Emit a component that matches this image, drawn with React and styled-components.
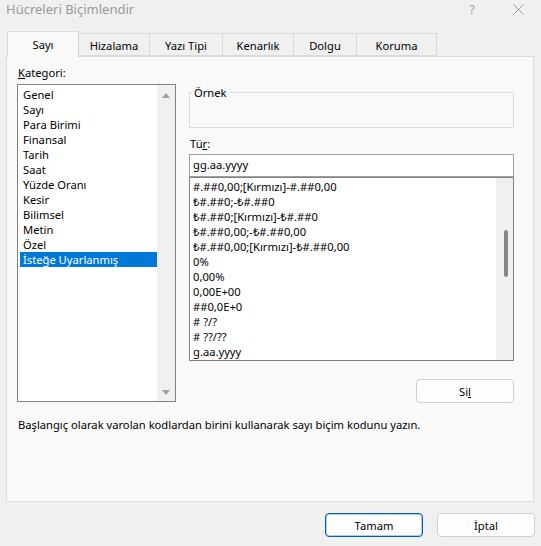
import React from 'react';
import styled, { createGlobalStyle } from 'styled-components';

const Global = createGlobalStyle`
    html, body {
        margin: 0;
        padding: 0;
        background: #f0f0f0;
    }
    body {
        font-family: "Noto Sans", "Open Sans", sans-serif;
        font-size: 11.2px;
        color: #000;
    }
`;

const Window = styled.div`
    width: 541px;
    height: 546px;
    background: #f0f0f0;
    display: flex;
    flex-direction: column;
    overflow: hidden;
`;

const TitleBar = styled.div`
    height: 18px;
    display: flex;
    align-items: center;
    justify-content: space-between;
    padding-left: 6px;
`;

const Title = styled.div`
    font-size: 13px;
    color: #9a9a9a;
    line-height: 18px;
`;

const TitleButtons = styled.div`
    display: flex;
    height: 18px;
`;

const TitleButton = styled.div`
    width: 46px;
    display: flex;
    align-items: center;
    justify-content: center;
    color: #9a9a9a;
    font-size: 12px;
`;

const TabStrip = styled.div`
    margin-top: 13px;
    height: 25px;
    display: flex;
    align-items: flex-end;
    padding-left: 7px;
`;

const Tab = styled.div`
    width: ${p => p.$w}px;
    height: ${p => (p.$active ? 26 : 23)}px;
    margin-bottom: ${p => (p.$active ? -1 : 0)}px;
    box-sizing: border-box;
    border: 1px solid #d9d9d9;
    border-bottom: ${p => (p.$active ? 'none' : '1px solid #d9d9d9')};
    border-left: ${p => (p.$first || p.$active ? '1px solid #d9d9d9' : 'none')};
    background: ${p => (p.$active ? '#f9f9f9' : '#f0f0f0')};
    display: flex;
    align-items: center;
    justify-content: center;
    padding-top: ${p => (p.$active ? 0 : 1)}px;
    position: relative;
    z-index: ${p => (p.$active ? 2 : 1)};
`;

const Panel = styled.div`
    margin: 0 7px 0 6px;
    height: 446px;
    box-sizing: border-box;
    border: 1px solid #dcdcdc;
    background: #f9f9f9;
    padding: 8px 0 0 10px;
    position: relative;
    z-index: 1;
`;

const Columns = styled.div`
    display: grid;
    grid-template-columns: 159px 325px;
    column-gap: 13px;
`;

const Column = styled.div`
    display: flex;
    flex-direction: column;
`;

const Label = styled.div`
    line-height: 15px;
    margin-left: 1px;
    margin-top: ${p => p.$top || 0}px;
`;

const ListBox = styled.div`
    margin-top: 4px;
    height: ${p => p.$h}px;
    box-sizing: border-box;
    border: 1px solid #828282;
    background: #fff;
    display: flex;
`;

const Items = styled.div`
    flex: 1;
    padding-top: ${p => p.$pt}px;
    overflow: hidden;
`;

const Item = styled.div`
    height: 15px;
    line-height: 15px;
    margin-left: ${p => p.$ml || 0}px;
    padding-left: ${p => p.$pl || 3}px;
    white-space: nowrap;
    background: ${p => (p.$selected ? '#0078d7' : 'transparent')};
    color: ${p => (p.$selected ? '#fff' : '#000')};
`;

const ScrollBar = styled.div`
    width: ${p => p.$w}px;
    background: #f0f0f0;
    display: flex;
    flex-direction: column;
    align-items: center;
    justify-content: space-between;
    padding: ${p => p.$pad};
    box-sizing: border-box;
`;

const Thumb = styled.div`
    width: 4px;
    height: 47px;
    border-radius: 2px;
    background: #878787;
    margin-left: 2px;
    margin-top: 52px;
`;

const Arrow = styled.div`
    width: 0;
    height: 0;
    border-left: 4px solid transparent;
    border-right: 4px solid transparent;
    ${p => (p.$down ? 'border-top: 5px solid #a0a0a0;' : 'border-bottom: 5px solid #a0a0a0;')}
`;

const Group = styled.fieldset`
    margin: 20px 0 0 0;
    height: 43px;
    box-sizing: border-box;
    border: 1px solid #dcdcdc;
    padding: 0;
    min-width: 0;

    legend {
        margin-left: 2px;
        padding: 0 2px;
        line-height: 15px;
    }
`;

const Input = styled.div`
    margin-top: 3px;
    height: 23px;
    box-sizing: border-box;
    border: 1px solid #a0a0a0;
    background: #fff;
    padding-left: 3px;
    line-height: 20px;
`;

const FormatList = styled(ListBox)`
    margin-top: 0;
`;

const ButtonRow = styled.div`
    display: flex;
    justify-content: flex-end;
    margin-top: 18px;
`;

const Button = styled.div`
    width: 98px;
    height: 24px;
    box-sizing: border-box;
    border-radius: 4px;
    border: 1px solid ${p => (p.$primary ? '#005fb8' : '#d0d0d0')};
    box-shadow: ${p => (p.$primary ? 'inset 0 0 0 1px rgba(0, 95, 184, 0.3)' : 'none')};
    background: #fdfdfd;
    display: flex;
    align-items: center;
    justify-content: center;
`;

const Hint = styled.div`
    margin: 14px 0 0 1px;
    line-height: 15px;
`;

const Footer = styled.div`
    margin-top: 11px;
    display: flex;
    justify-content: flex-end;
    gap: 14px;
    padding-right: 6px;
`;

const categories = [
    'Genel', 'Sayı', 'Para Birimi', 'Finansal', 'Tarih', 'Saat',
    'Yüzde Oranı', 'Kesir', 'Bilimsel', 'Metin', 'Özel', 'İsteğe Uyarlanmış',
];

const formats = [
    '#.##0,00;[Kırmızı]-#.##0,00',
    '₺#.##0;-₺#.##0',
    '₺#.##0;[Kırmızı]-₺#.##0',
    '₺#.##0,00;-₺#.##0,00',
    '₺#.##0,00;[Kırmızı]-₺#.##0,00',
    '0%',
    '0,00%',
    '0,00E+00',
    '##0,0E+0',
    '# ?/?',
    '# ??/??',
    'g.aa.yyyy',
];

const tabs = [
    ['Sayı', 72], ['Hizalama', 71], ['Yazı Tipi', 73],
    ['Kenarlık', 71], ['Dolgu', 63], ['Koruma', 80],
];

export default function App() {
    return (
        <Window>
            <Global />
            <TitleBar>
                <Title>Hücreleri Biçimlendir</Title>
                <TitleButtons>
                    <TitleButton>?</TitleButton>
                    <TitleButton>
                        <svg width="11" height="11" viewBox="0 0 11 11">
                            <path d="M0.5 0.5 L10.5 10.5 M10.5 0.5 L0.5 10.5" stroke="#9a9a9a" strokeWidth="1" />
                        </svg>
                    </TitleButton>
                </TitleButtons>
            </TitleBar>

            <TabStrip>
                {tabs.map(([name, w], i) => (
                    <Tab key={name} $w={w} $active={i === 0} $first={i === 0}>{name}</Tab>
                ))}
            </TabStrip>

            <Panel>
                <Columns>
                    <Column>
                        <Label><u>K</u>ategori:</Label>
                        <ListBox $h={318}>
                            <Items $pt={1.5}>
                                {categories.map((c, i) => (
                                    <Item key={c} $ml={2} $pl={3} $selected={i === 11}>{c}</Item>
                                ))}
                            </Items>
                            <ScrollBar $w={18} $pad="8px 0 6px 0">
                                <Arrow />
                                <Arrow $down />
                            </ScrollBar>
                        </ListBox>
                    </Column>

                    <Column>
                        <Group>
                            <legend>Örnek</legend>
                        </Group>
                        <Label $top={8}>Tü<u>r</u>:</Label>
                        <Input>gg.aa.yyyy</Input>
                        <FormatList $h={184}>
                            <Items $pt={1}>
                                {formats.map(f => (
                                    <Item key={f} $pl={3}>{f}</Item>
                                ))}
                            </Items>
                            <ScrollBar $w={17} $pad="0">
                                <Thumb />
                            </ScrollBar>
                        </FormatList>
                        <ButtonRow>
                            <Button>Si<u>l</u></Button>
                        </ButtonRow>
                    </Column>
                </Columns>
                <Hint>Başlangıç olarak varolan kodlardan birini kullanarak sayı biçim kodunu yazın.</Hint>
            </Panel>

            <Footer>
                <Button $primary>Tamam</Button>
                <Button>İptal</Button>
            </Footer>
        </Window>
    );
}
